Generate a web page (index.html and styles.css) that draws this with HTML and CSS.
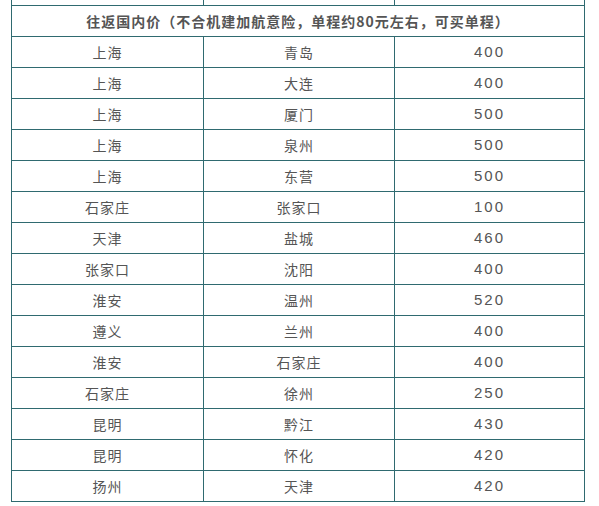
FILE: index.html
```html
<!DOCTYPE html>
<html lang="zh">
<head>
<meta charset="utf-8">
<link rel="stylesheet" href="styles.css">
</head>
<body>
<div class="wrap">
<table class="fares">
<tr class="cut"><td></td><td></td><td></td></tr>
<tr class="head"><td colspan="3">往返国内价（不合机建加航意险，单程约80元左右，可买单程）</td></tr>
<tr><td>上海</td><td>青岛</td><td class="num">400</td></tr>
<tr><td>上海</td><td>大连</td><td class="num">400</td></tr>
<tr><td>上海</td><td>厦门</td><td class="num">500</td></tr>
<tr><td>上海</td><td>泉州</td><td class="num">500</td></tr>
<tr><td>上海</td><td>东营</td><td class="num">500</td></tr>
<tr><td>石家庄</td><td>张家口</td><td class="num">100</td></tr>
<tr><td>天津</td><td>盐城</td><td class="num">460</td></tr>
<tr><td>张家口</td><td>沈阳</td><td class="num">400</td></tr>
<tr><td>淮安</td><td>温州</td><td class="num">520</td></tr>
<tr><td>遵义</td><td>兰州</td><td class="num">400</td></tr>
<tr><td>淮安</td><td>石家庄</td><td class="num">400</td></tr>
<tr><td>石家庄</td><td>徐州</td><td class="num">250</td></tr>
<tr><td>昆明</td><td>黔江</td><td class="num">430</td></tr>
<tr><td>昆明</td><td>怀化</td><td class="num">420</td></tr>
<tr><td>扬州</td><td>天津</td><td class="num">420</td></tr>
</table>
</div>
</body>
</html>
```
FILE: styles.css
```css
html, body {
  margin: 0;
  padding: 0;
  background: #ffffff;
  overflow: hidden;
}
.wrap {
  padding-left: 11px;
  margin-top: -26px;
}
.fares {
  border-collapse: collapse;
  table-layout: fixed;
  width: 574px;
  font-family: "Noto Sans CJK SC", "Liberation Sans", sans-serif;
  font-size: 14px;
  color: #555555;
}
.fares td {
  border: 1px solid #2f6a70;
  height: 30px;
  padding: 0;
  text-align: center;
  vertical-align: middle;
  letter-spacing: 1px;
  line-height: 20px;
}
.fares td:nth-child(1) { width: 191px; }
.fares td:nth-child(2) { width: 190px; }
.fares .head td {
  font-weight: bold;
  letter-spacing: 1px;
  color: #555555;
}
.fares .num {
  font-family: "Liberation Sans", "Noto Sans CJK SC", sans-serif;
  letter-spacing: 2px;
  font-size: 15px;
}
```
